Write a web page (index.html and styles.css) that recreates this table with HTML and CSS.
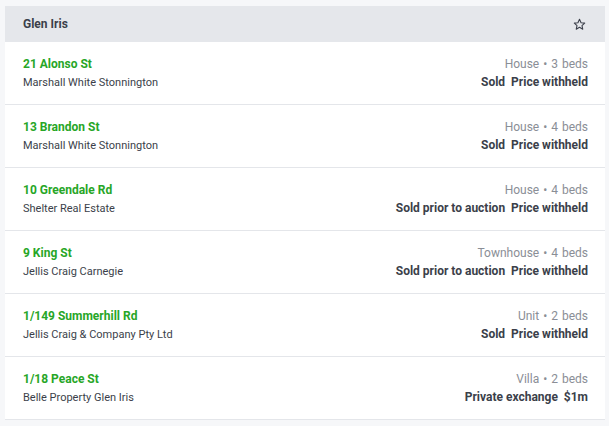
FILE: index.html
```html
<!DOCTYPE html>
<html>
<head>
<meta charset="utf-8">
<link rel="stylesheet" href="styles.css">
</head>
<body>
<div class="card">
  <div class="header">
    <span class="suburb">Glen Iris</span>
    <svg class="star" width="13" height="13" viewBox="0 0 24 24"><path d="M12 2.5l2.9 6.2 6.7.7-5 4.6 1.4 6.6L12 17.2l-6 3.4 1.4-6.6-5-4.6 6.7-.7z" fill="none" stroke="#3b3f4a" stroke-width="2" stroke-linejoin="round"/></svg>
  </div>
  <div class="row">
    <div class="left"><div class="addr">21 Alonso St</div><div class="agent">Marshall White Stonnington</div></div>
    <div class="right"><div class="type">House • 3 beds</div><div class="price">Sold&nbsp; Price withheld</div></div>
  </div>
  <div class="row">
    <div class="left"><div class="addr">13 Brandon St</div><div class="agent">Marshall White Stonnington</div></div>
    <div class="right"><div class="type">House • 4 beds</div><div class="price">Sold&nbsp; Price withheld</div></div>
  </div>
  <div class="row">
    <div class="left"><div class="addr">10 Greendale Rd</div><div class="agent">Shelter Real Estate</div></div>
    <div class="right"><div class="type">House • 4 beds</div><div class="price">Sold prior to auction&nbsp; Price withheld</div></div>
  </div>
  <div class="row">
    <div class="left"><div class="addr">9 King St</div><div class="agent">Jellis Craig Carnegie</div></div>
    <div class="right"><div class="type">Townhouse • 4 beds</div><div class="price">Sold prior to auction&nbsp; Price withheld</div></div>
  </div>
  <div class="row">
    <div class="left"><div class="addr">1/149 Summerhill Rd</div><div class="agent">Jellis Craig &amp; Company Pty Ltd</div></div>
    <div class="right"><div class="type">Unit • 2 beds</div><div class="price">Sold&nbsp; Price withheld</div></div>
  </div>
  <div class="row">
    <div class="left"><div class="addr">1/18 Peace St</div><div class="agent">Belle Property Glen Iris</div></div>
    <div class="right"><div class="type">Villa • 2 beds</div><div class="price">Private exchange&nbsp; $1m</div></div>
  </div>
</div>
</body>
</html>
```
FILE: styles.css
```css
html, body { margin: 0; padding: 0; }
body {
  background: #f6f7f9;
  font-family: Roboto, "Liberation Sans", sans-serif;
  padding: 6px 4px 0 5px;
  height: 426px;
  box-sizing: border-box;
  overflow: hidden;
}
.card {
  background: #ffffff;
  width: 600px;
}
.header {
  background: #e5e7eb;
  height: 36px;
  display: flex;
  align-items: center;
  justify-content: space-between;
  padding: 0 19px 0 18px;
}
.suburb {
  font-size: 12px;
  font-weight: 700;
  color: #3b3f4a;
}
.star { display: block; }
.row {
  border-bottom: 1px solid #e4e6ea;
  display: flex;
  justify-content: space-between;
  align-items: flex-start;
  padding: 14px 17px 0 18px;
  box-sizing: content-box;
  height: 48px;
}
.addr {
  font-size: 12px;
  font-weight: 700;
  color: #27a627;
  line-height: 16px;
}
.agent {
  font-size: 11px;
  color: #3b3f4a;
  line-height: 14px;
  margin-top: 4px;
}
.right { text-align: right; }
.type {
  font-size: 12px;
  color: #8a8e96;
  line-height: 16px;
  word-spacing: 1px;
}
.price {
  font-size: 12px;
  font-weight: 700;
  color: #3b3f4a;
  line-height: 16px;
  margin-top: 2px;
}
```
